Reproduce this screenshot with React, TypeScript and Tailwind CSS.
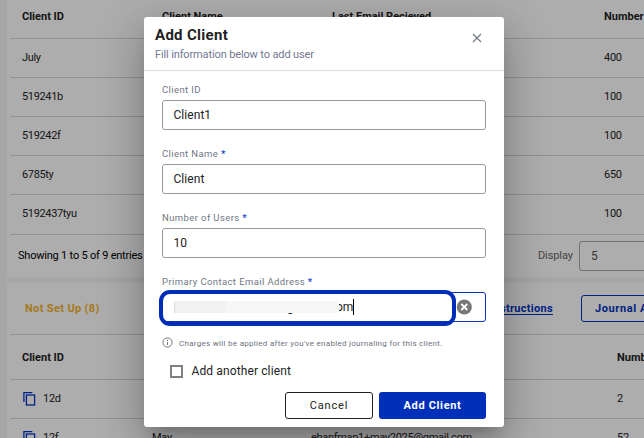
import React from 'react';

interface Client {
  id: string;
  users: number;
}

interface PendingClient {
  id: string;
  name: string;
  email: string;
  users: number;
}

const clients: Client[] = [
  { id: 'July', users: 400 },
  { id: '519241b', users: 100 },
  { id: '519242f', users: 100 },
  { id: '6785ty', users: 650 },
  { id: '5192437tyu', users: 100 },
];

const pendingClients: PendingClient[] = [
  { id: '12d', name: '', email: '', users: 2 },
  { id: '12f', name: 'May', email: 'ehanfman1+may2025@gmail.com', users: 52 },
];

const CopyIcon: React.FC = () => (
  <svg width="14" height="16" viewBox="0 0 14 16" fill="none" stroke="#0033c4" strokeWidth="1.3" className="shrink-0">
    <path d="M0.9 11V1.7H9.3" />
    <rect x="3.4" y="4" width="8.2" height="10" />
  </svg>
);

const ClientsTable: React.FC = () => (
  <section className="ml-[7px] h-[277px] bg-white pl-[3px]">
    <div className="flex h-[39px] items-center border-b border-[#d6d6d6] pb-[4px] pl-3 text-[11px] font-bold">
      <span className="w-[140px] shrink-0">Client ID</span>
      <span className="w-[170px] shrink-0">Client Name</span>
      <span className="w-[272px] shrink-0">Last Email Recieved</span>
      <span className="shrink-0 whitespace-nowrap">Number of Users</span>
    </div>
    {clients.map((client) => (
      <div
        key={client.id}
        className="flex h-[39px] items-center border-b border-[#d6d6d6] pl-3 text-[11px] tracking-[-0.35px] last-of-type:h-10"
      >
        <span className="w-[582px] shrink-0">{client.id}</span>
        <span className="tracking-[-0.25px]">{client.users}</span>
      </div>
    ))}
    <footer className="flex h-[42px] items-center pl-2">
      <span className="w-[520px] shrink-0 text-[11px] tracking-[-0.21px] text-black">Showing 1 to 5 of 9 entries</span>
      <span className="w-[41px] shrink-0 text-[11px] tracking-[-0.1px] text-[#666]">Display</span>
      <div className="flex h-[30px] w-[100px] shrink-0 items-center rounded-[3px] border border-[#aaa] pl-[11px] text-xs text-[#555]">
        5
      </div>
    </footer>
  </section>
);

const PendingTable: React.FC = () => (
  <section className="mt-1.5 ml-[7px] h-[200px] bg-white pl-[3px]">
    <div className="flex h-[52px] items-center border-b border-[#d6d6d6] pl-[15px] text-[11px] font-bold tracking-[0.3px]">
      <span className="w-[415px] shrink-0 pt-px tracking-[0.35px] text-[#f5b32a]">Not Set Up (8)</span>
      <div className="mr-7 flex w-[113px] shrink-0 justify-end pt-px">
        <a className="whitespace-nowrap text-[#0033c4] underline underline-offset-2">View Instructions</a>
      </div>
      <button className="h-[27px] w-[110px] shrink-0 rounded-[3px] border border-[#0033c4] pt-px pl-[13px] text-left tracking-[0.6px] whitespace-nowrap text-[#0033c4]">
        Journal All
      </button>
    </div>
    <div className="flex h-[45px] items-center border-b border-[#d6d6d6] pt-0.5 pl-3 text-[11px] font-bold">
      <span className="w-[595px] shrink-0">Client ID</span>
      <span className="shrink-0 whitespace-nowrap">Number of Users</span>
    </div>
    {pendingClients.map((client) => (
      <div
        key={client.id}
        className="flex h-[39px] items-center border-b border-[#d6d6d6] pl-[13px] text-[11px] tracking-[-0.3px]"
      >
        <CopyIcon />
        <span className="ml-[6px] w-[109px] shrink-0">{client.id}</span>
        <span className="w-[159px] shrink-0">{client.name}</span>
        <span className="w-[306px] shrink-0">{client.email}</span>
        <span>{client.users}</span>
      </div>
    ))}
  </section>
);

interface FieldProps {
  label: string;
  value: string;
  required?: boolean;
}

const FieldLabel: React.FC<{ label: string; required?: boolean }> = ({ label, required }) => (
  <div className="h-[17px] pt-px text-[9.5px] leading-[12px] tracking-[0.4px] text-[#6f7785]">
    {label}
    {required && <span className="font-bold text-[#2747cc]"> *</span>}
  </div>
);

const Field: React.FC<FieldProps> = ({ label, value, required }) => (
  <div className="h-16">
    <FieldLabel label={label} required={required} />
    <div className="flex h-[30px] items-center rounded-[3px] border border-[#9a9a9a] pl-[10.5px] text-xs tracking-[0.05px] text-[#222]">
      {value}
    </div>
  </div>
);

const EmailField: React.FC = () => (
  <div className="h-[54px]">
    <FieldLabel label="Primary Contact Email Address" required />
    <div className="relative flex h-[30px] items-center justify-end rounded-[3px] border border-[#0b35b4] pr-[13px]">
      <span className="absolute top-[6px] left-[124px] text-xs leading-4 text-[#222]">g</span>
      <span className="absolute top-[6px] left-[173px] border-r border-black text-xs leading-4 text-[#222]">om</span>
      <div className="absolute top-[8px] left-[11px] flex h-3 w-[165px] border-l border-[#dcdce6] bg-[#f6f6f6]">
        <div className="w-[51px] bg-[#f1f1f1]" />
      </div>
      <div className="absolute top-[-3px] left-[-4px] h-9 w-[297px] rounded-[11px] border-4 border-[#002db8]" />
      <svg width="16" height="16" viewBox="0 0 16 16" className="relative">
        <circle cx="8.3" cy="8" r="7.6" fill="#777" />
        <path d="M5.3 5l6 6M11.3 5l-6 6" stroke="#fff" strokeWidth="1.8" />
      </svg>
    </div>
  </div>
);

const AddClientDialog: React.FC = () => (
  <div className="flex h-[410px] w-[360px] flex-col rounded-[3px] bg-white shadow-[0_11px_15px_-7px_rgba(0,0,0,0.2),0_24px_38px_3px_rgba(0,0,0,0.14),0_9px_46px_8px_rgba(0,0,0,0.12)]">
    <header className="flex h-[54px] shrink-0 justify-between border-b border-[#dcdcdc] pr-[22px] pl-[11px]">
      <div className="pt-[9px]">
        <h2 className="text-[15px] leading-[18px] font-bold tracking-[0.3px] text-[#1f1f1f]">Add Client</h2>
        <p className="mt-[4px] text-[11px] leading-[14px] tracking-[-0.13px] text-[#717891]">
          Fill information below to add user
        </p>
      </div>
      <svg width="10" height="10" viewBox="0 0 10 10" className="mt-4" stroke="#737b87" strokeWidth="1.3">
        <path d="M1 1l8 8M9 1L1 9" />
      </svg>
    </header>
    <div className="px-[18px] pt-3">
      <Field label="Client ID" value="Client1" />
      <Field label="Client Name" value="Client" required />
      <Field label="Number of Users" value="10" required />
      <EmailField />
      <div className="mt-[8px] flex h-3 items-center text-[8px] tracking-[0.29px] text-[#6b7280]">
        <svg width="11" height="11" viewBox="0 0 11 11" fill="none" stroke="#777" className="mr-[6px] mb-px">
          <circle cx="5.5" cy="5.5" r="4.6" />
          <path d="M5.5 5v3M5.5 2.8v1.2" />
        </svg>
        <span className="pt-px">Charges will be applied after you've enabled journaling for this client.</span>
      </div>
      <label className="mt-[14px] flex h-4 items-center pl-2 text-xs tracking-[0.12px] text-[#222]">
        <span className="mr-[8.5px] h-[13px] w-[13px] border-2 border-[#808080]" />
        Add another client
      </label>
      <div className="mt-[13px] flex justify-end gap-1.5 text-[11px]">
        <button className="h-[27px] w-[88px] rounded-[3px] border border-[#222] pt-px tracking-[0.8px] text-[#222]">
          Cancel
        </button>
        <button className="h-[27px] w-[107px] rounded-[3px] bg-[#0030b9] pt-px font-bold tracking-[0.65px] text-white">
          Add Client
        </button>
      </div>
    </div>
  </div>
);

const App: React.FC = () => (
  <div className="relative h-[438px] w-[644px] overflow-hidden bg-[#f5f5f5] font-['Roboto',sans-serif] text-[#222]">
    <ClientsTable />
    <PendingTable />
    <div className="absolute inset-0 flex items-start justify-center bg-black/32 pt-[17px] pl-1">
      <AddClientDialog />
    </div>
  </div>
);

export default App;
